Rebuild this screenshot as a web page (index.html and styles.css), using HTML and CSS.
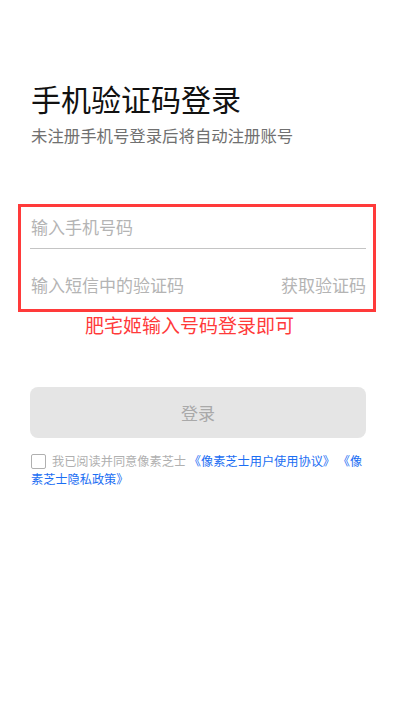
FILE: index.html
```html
<!DOCTYPE html>
<html lang="zh-CN">
<head>
<meta charset="utf-8">
<title>手机验证码登录</title>
<link rel="stylesheet" href="styles.css">
</head>
<body>
<main class="page">
  <h1 class="title">手机验证码登录</h1>
  <p class="subtitle">未注册手机号登录后将自动注册账号</p>
  <div class="form-box">
    <div class="field field-phone">
      <span class="placeholder">输入手机号码</span>
    </div>
    <div class="field field-code">
      <span class="placeholder">输入短信中的验证码</span>
      <span class="get-code">获取验证码</span>
    </div>
  </div>
  <p class="note">肥宅姬输入号码登录即可</p>
  <button class="login-btn" type="button">登录</button>
  <p class="agree"><span class="checkbox"></span>我已阅读并同意像素芝士 <a class="link">《像素芝士用户使用协议》</a> <a class="link">《像素芝士隐私政策》</a></p>
</main>
</body>
</html>
```
FILE: styles.css
```css
* { box-sizing: border-box; }
html, body { margin: 0; padding: 0; background: #fff; }
body {
  font-family: "Noto Sans CJK SC", "Noto Sans", sans-serif;
  width: 397px;
  height: 710px;
  overflow: hidden;
}
.page {
  padding: 78px 31px 0 30px;
  display: flex;
  flex-direction: column;
}
.title {
  margin: 0;
  font-size: 30px;
  line-height: 40px;
  font-weight: 400;
  color: #111;
  padding-left: 1px;
}
.subtitle {
  margin: 5px 0 0;
  font-size: 16.4px;
  line-height: 24px;
  color: #707070;
  padding-left: 1px;
}
.form-box {
  margin: 57px -10px 0 -12px;
  border: 3px solid #ff3a3a;
  padding: 0 7px 0 9px;
}
.field {
  display: flex;
  align-items: center;
  justify-content: space-between;
  font-size: 17px;
  line-height: 24px;
  color: #b4b4b4;
}
.field-phone {
  height: 42px;
  padding-bottom: 1px;
  border-bottom: 1px solid #c4c4c4;
}
.field-code {
  padding: 24px 0 12px;
}
.placeholder { padding-left: 1px; }
.get-code { color: #b4b4b4; }
.note {
  margin: 0;
  padding-left: 55px;
  font-size: 19px;
  line-height: 26px;
  color: #ff3a3a;
}
.login-btn {
  margin-top: 49px;
  height: 51px;
  border: none;
  border-radius: 8px;
  background: #e5e5e5;
  color: #a9a9a9;
  font-family: inherit;
  font-size: 17px;
  padding: 0;
}
.agree {
  margin: 14px 0 0;
  font-size: 12.2px;
  line-height: 18px;
  color: #b0b0b0;
  padding-left: 1px;
}
.checkbox {
  display: inline-block;
  width: 15px;
  height: 15px;
  border: 1.5px solid #b0b0b0;
  border-radius: 2px;
  vertical-align: -3px;
  margin-right: 6px;
}
.link { color: #1b6ef3; text-decoration: none; }
```
